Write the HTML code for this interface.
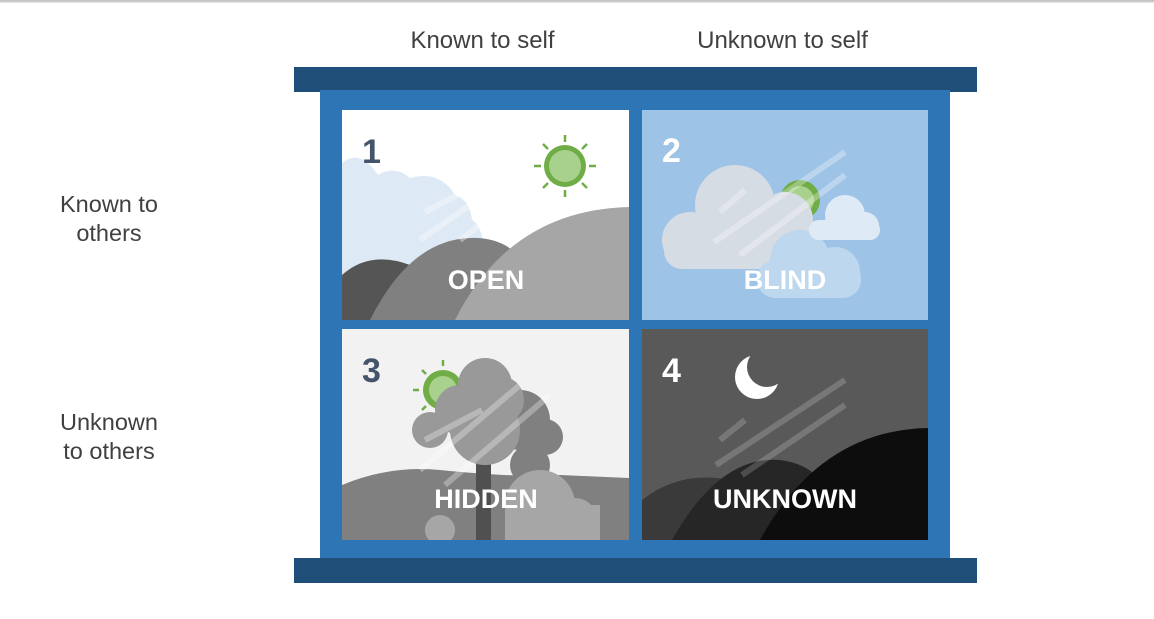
<!DOCTYPE html>
<html><head><meta charset="utf-8"><style>
html,body{margin:0;padding:0;background:#fff;}
body{width:1154px;height:619px;overflow:hidden;position:relative;font-family:"Liberation Sans",Arial,sans-serif;}
.lbl{position:absolute;color:#404040;font-size:24px;text-align:center;line-height:29px;}
</style></head><body>
<div style="position:absolute;left:0;top:0;width:1154px;height:3px;background:linear-gradient(#bbb,#e8e8e8);"></div>
<div class="lbl" style="left:370px;top:26px;width:225px;">Known to self</div>
<div class="lbl" style="left:660px;top:26px;width:245px;">Unknown to self</div>
<div class="lbl" style="left:20px;top:190px;width:178px;font-size:23.5px;">Known to<br>others</div>
<div class="lbl" style="left:20px;top:408px;width:178px;font-size:23.5px;">Unknown<br>to others</div>
<svg width="1154" height="619" style="position:absolute;left:0;top:0" font-family="Liberation Sans,Arial,sans-serif" font-weight="bold">
<defs>
<clipPath id="c1"><rect x="342" y="110" width="287" height="210"/></clipPath>
<clipPath id="c2"><rect x="642" y="110" width="286" height="210"/></clipPath>
<clipPath id="c3"><rect x="342" y="329" width="287" height="211"/></clipPath>
<clipPath id="c4"><rect x="642" y="329" width="286" height="211"/></clipPath>
</defs>
<rect x="294" y="67" width="683" height="25" fill="#1f4e79"/>
<rect x="320" y="90" width="630" height="468" fill="#2e75b6"/>
<rect x="294" y="558" width="683" height="25" fill="#1f4e79"/>

<!-- Panel 1 -->
<g clip-path="url(#c1)">
<rect x="342" y="110" width="287" height="210" fill="#fff"/>
<path d="M342 320 V163 Q360 148 378 175 Q395 165 410 178 Q440 170 455 195 Q470 200 472 220 Q482 225 484 250 L484 320 H342Z" fill="#dde9f5"/>
<circle cx="565" cy="166" r="21" fill="#70ad47"/>
<circle cx="565" cy="166" r="16" fill="#a9d18e"/>
<g stroke="#70ad47" stroke-width="2.5">
<line x1="565" y1="135" x2="565" y2="142"/><line x1="565" y1="190" x2="565" y2="197"/>
<line x1="534" y1="166" x2="541" y2="166"/><line x1="589" y1="166" x2="596" y2="166"/>
<line x1="543" y1="144" x2="548" y2="149"/><line x1="582" y1="183" x2="587" y2="188"/>
<line x1="587" y1="144" x2="582" y2="149"/><line x1="548" y1="183" x2="543" y2="188"/>
</g>
<path d="M342 320 V275 Q370 250 410 265 Q440 280 445 320Z" fill="#555"/>
<path d="M370 320 Q410 240 470 238 Q520 236 540 290 L520 320Z" fill="#808080"/>
<path d="M455 320 Q510 210 629 207 V320Z" fill="#a6a6a6"/>
<g stroke="#fff" stroke-opacity=".35" stroke-width="6">
<line x1="425" y1="212" x2="482" y2="182"/><line x1="420" y1="240" x2="520" y2="170"/>
<line x1="460" y1="240" x2="545" y2="175"/>
</g>
<text x="362" y="163" font-size="34" fill="#44546a">1</text>
<text x="486" y="289" font-size="27" fill="#fff" text-anchor="middle">OPEN</text>
</g>

<!-- Panel 2 -->
<g clip-path="url(#c2)">
<rect x="642" y="110" width="286" height="210" fill="#9dc3e6"/>
<circle cx="800" cy="200" r="20" fill="#70ad47"/>
<circle cx="800" cy="200" r="14" fill="#a9d18e"/>
<g fill="#d6dce4">
<circle cx="735" cy="205" r="40"/><circle cx="690" cy="240" r="28"/><circle cx="785" cy="220" r="28"/>
<rect x="664" y="230" width="150" height="39" rx="18"/>
</g>
<g fill="#bdd7ee"><circle cx="800" cy="260" r="30"/><circle cx="835" cy="272" r="25"/><rect x="757" y="260" width="104" height="38" rx="18"/></g>
<g fill="#deebf7"><circle cx="845" cy="215" r="20"/><circle cx="865" cy="226" r="14"/><rect x="809" y="220" width="71" height="20" rx="10"/></g>
<g stroke="#fff" stroke-opacity=".3" stroke-width="6">
<line x1="720" y1="212" x2="745" y2="190"/><line x1="714" y1="242" x2="845" y2="152"/>
<line x1="740" y1="255" x2="845" y2="175"/>
</g>
<text x="662" y="162" font-size="34" fill="#fff">2</text>
<text x="785" y="289" font-size="27" fill="#fff" text-anchor="middle">BLIND</text>
</g>

<!-- Panel 3 -->
<g clip-path="url(#c3)">
<rect x="342" y="329" width="287" height="211" fill="#f2f2f2"/>
<circle cx="443" cy="390" r="20" fill="#70ad47"/>
<circle cx="443" cy="390" r="14" fill="#a9d18e"/>
<g stroke="#70ad47" stroke-width="2.5">
<line x1="443" y1="360" x2="443" y2="366"/><line x1="413" y1="390" x2="419" y2="390"/>
<line x1="422" y1="370" x2="426" y2="374"/><line x1="422" y1="410" x2="426" y2="406"/>
</g>
<path d="M342 485 Q390 465 440 470 Q520 478 560 475 L629 478 V540 H342Z" fill="#808080"/>
<rect x="476" y="460" width="15" height="80" fill="#505050"/>
<g fill="#808080"><circle cx="520" cy="420" r="30"/><circle cx="545" cy="437" r="18"/><circle cx="530" cy="465" r="20"/></g>
<g fill="#999"><circle cx="485" cy="385" r="27"/><circle cx="460" cy="410" r="25"/><circle cx="430" cy="430" r="18"/><circle cx="485" cy="430" r="35"/><circle cx="500" cy="400" r="24"/></g>
<g fill="#a6a6a6"><circle cx="540" cy="505" r="35"/><circle cx="575" cy="520" r="22"/><rect x="505" y="505" width="95" height="40"/></g>
<g fill="#a6a6a6"><circle cx="440" cy="530" r="15"/></g>
<g stroke="#fff" stroke-opacity=".3" stroke-width="6">
<line x1="425" y1="440" x2="482" y2="410"/><line x1="420" y1="470" x2="520" y2="385"/>
<line x1="445" y1="485" x2="550" y2="395"/>
</g>
<text x="362" y="382" font-size="34" fill="#44546a">3</text>
<text x="486" y="508" font-size="27" fill="#fff" text-anchor="middle">HIDDEN</text>
</g>

<!-- Panel 4 -->
<g clip-path="url(#c4)">
<rect x="642" y="329" width="286" height="211" fill="#595959"/>
<circle cx="757" cy="377" r="22" fill="#fff"/>
<circle cx="767" cy="367" r="20" fill="#595959"/>
<path d="M642 500 Q680 470 730 480 Q780 490 790 540 H642Z" fill="#3a3a3a"/>
<path d="M672 540 Q720 455 780 460 Q820 465 830 500 L820 540Z" fill="#262626"/>
<path d="M760 540 Q820 430 928 428 V540Z" fill="#0d0d0d"/>
<g stroke="#fff" stroke-opacity=".18" stroke-width="6">
<line x1="720" y1="440" x2="745" y2="420"/><line x1="716" y1="465" x2="845" y2="380"/>
<line x1="742" y1="475" x2="845" y2="405"/>
</g>
<text x="662" y="382" font-size="34" fill="#fff">4</text>
<text x="785" y="508" font-size="27" fill="#fff" text-anchor="middle">UNKNOWN</text>
</g>
</svg>
</body></html>
